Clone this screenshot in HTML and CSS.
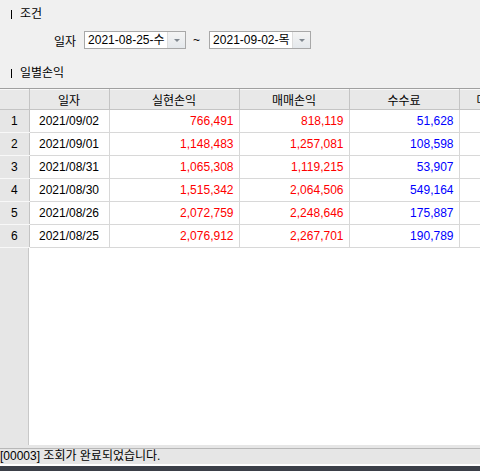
FILE: index.html
```html
<!DOCTYPE html>
<html lang="ko">
<head>
<meta charset="utf-8">
<title>일별손익</title>
<link rel="stylesheet" href="styles.css">
</head>
<body>
<div class="page">
  <div class="sec-title sec-cond"><span class="bar"></span>조건</div>
  <div class="cond-row">
    <span class="label">일자</span>
    <div class="combo"><span class="combo-text">2021-08-25-수</span><span class="combo-btn"><span class="tri"></span></span></div>
    <span class="tilde">~</span>
    <div class="combo"><span class="combo-text">2021-09-02-목</span><span class="combo-btn"><span class="tri"></span></span></div>
  </div>
  <div class="sec-title sec-daily"><span class="bar"></span>일별손익</div>
  <div class="grid">
    <table class="tbl">
      <colgroup>
        <col class="c-no"><col class="c-date"><col class="c-real"><col class="c-trade"><col class="c-fee"><col class="c-more">
      </colgroup>
      <thead>
        <tr><th class="rh"></th><th>일자</th><th>실현손익</th><th>매매손익</th><th>수수료</th><th class="more">매도금액</th></tr>
      </thead>
      <tbody>
        <tr><td class="rh">1</td><td class="d">2021/09/02</td><td class="r">766,491</td><td class="r">818,119</td><td class="b">51,628</td><td></td></tr>
        <tr><td class="rh">2</td><td class="d">2021/09/01</td><td class="r">1,148,483</td><td class="r">1,257,081</td><td class="b">108,598</td><td></td></tr>
        <tr><td class="rh">3</td><td class="d">2021/08/31</td><td class="r">1,065,308</td><td class="r">1,119,215</td><td class="b">53,907</td><td></td></tr>
        <tr><td class="rh">4</td><td class="d">2021/08/30</td><td class="r">1,515,342</td><td class="r">2,064,506</td><td class="b">549,164</td><td></td></tr>
        <tr><td class="rh">5</td><td class="d">2021/08/26</td><td class="r">2,072,759</td><td class="r">2,248,646</td><td class="b">175,887</td><td></td></tr>
        <tr><td class="rh">6</td><td class="d">2021/08/25</td><td class="r">2,076,912</td><td class="r">2,267,701</td><td class="b">190,789</td><td></td></tr>
      </tbody>
    </table>
  </div>
  <div class="status">[00003] 조회가 완료되었습니다.</div>
  <div class="taskbar"></div>
</div>
</body>
</html>
```
FILE: styles.css
```css
html, body {
  margin: 0;
  padding: 0;
}
body {
  width: 480px;
  height: 471px;
  overflow: hidden;
  background: #f0f0f0;
  font-family: "Liberation Sans", "Noto Sans CJK KR", sans-serif;
  font-size: 12px;
  color: #000;
}
.page {
  display: flex;
  flex-direction: column;
  height: 471px;
}
.sec-title {
  display: flex;
  align-items: center;
  height: 14px;
  padding-left: 11px;
  line-height: 14px;
}
.sec-cond {
  margin-top: 7px;
}
.sec-daily {
  margin-top: 17px;
}
.bar {
  display: inline-block;
  width: 1px;
  height: 9px;
  background: #000;
  margin-right: 8px;
}
.cond-row {
  display: flex;
  align-items: center;
  margin-top: 10px;
  height: 18px;
}
.label {
  margin-left: 54px;
  margin-right: 8px;
}
.combo {
  display: flex;
  align-items: stretch;
  width: 100px;
  height: 16px;
  border: 1px solid #a8a8a8;
  background: #fff;
}
.combo-text {
  flex: 1;
  padding-left: 3px;
  line-height: 16px;
  white-space: nowrap;
  overflow: hidden;
}
.combo-btn {
  width: 17px;
  display: flex;
  align-items: center;
  justify-content: center;
  background: linear-gradient(#f4f4f4, #e4e8ec);
  border-left: 1px solid #dcdcdc;
}
.tri {
  width: 0;
  height: 0;
  border-left: 3px solid transparent;
  border-right: 3px solid transparent;
  border-top: 3px solid #808890;
}
.tilde {
  margin: 0 9px 0 7px;
}
.grid {
  margin-top: 8px;
  flex: 1;
  overflow: hidden;
  border-top: 1px solid #a0a0a0;
  box-shadow: inset 0 1px 0 #c8c8c8;
  background: linear-gradient(to right, #e6e6e6 0 28px, #c8c8c8 28px 29px, #fff 29px);
}
.tbl {
  border-collapse: collapse;
  table-layout: fixed;
  width: 570px;
}
.c-no { width: 29px; }
.c-date { width: 80px; }
.c-real { width: 130px; }
.c-trade { width: 110px; }
.c-fee { width: 110px; }
.c-more { width: 111px; }
.tbl th {
  height: 19px;
  padding: 0;
  font-weight: normal;
  background: #e8e8e8;
  border-right: 1px solid #c4c4c4;
  border-bottom: 1px solid #c4c4c4;
  border-top: 1px solid #f8f8f8;
  text-align: center;
  white-space: nowrap;
  overflow: hidden;
}
.tbl th.more {
  text-align: left;
  padding-left: 17px;
}
.tbl td {
  height: 22px;
  padding: 0 5px;
  border-right: 1px solid #d8d8d8;
  border-bottom: 1px solid #d8d8d8;
  background: #fff;
  white-space: nowrap;
  overflow: hidden;
}
.tbl td.rh {
  background: #e6e6e6;
  text-align: center;
  padding: 0;
  border-right: 1px solid #c4c4c4;
  border-bottom: 1px solid #f8f8f8;
}
.tbl td.d {
  text-align: center;
}
.tbl td.r {
  text-align: right;
  color: #ff0000;
}
.tbl td.b {
  text-align: right;
  color: #0000ff;
}
.status {
  height: 15px;
  line-height: 15px;
  padding-top: 1px;
  border-top: 3px solid #e6e6e6;
  border-bottom: 2px solid #fff;
  box-shadow: inset 0 1px 0 #b8b8b8;
  background: #e6e6e6;
  white-space: nowrap;
}
.taskbar {
  height: 5px;
  background: #3b3f48;
}
```
